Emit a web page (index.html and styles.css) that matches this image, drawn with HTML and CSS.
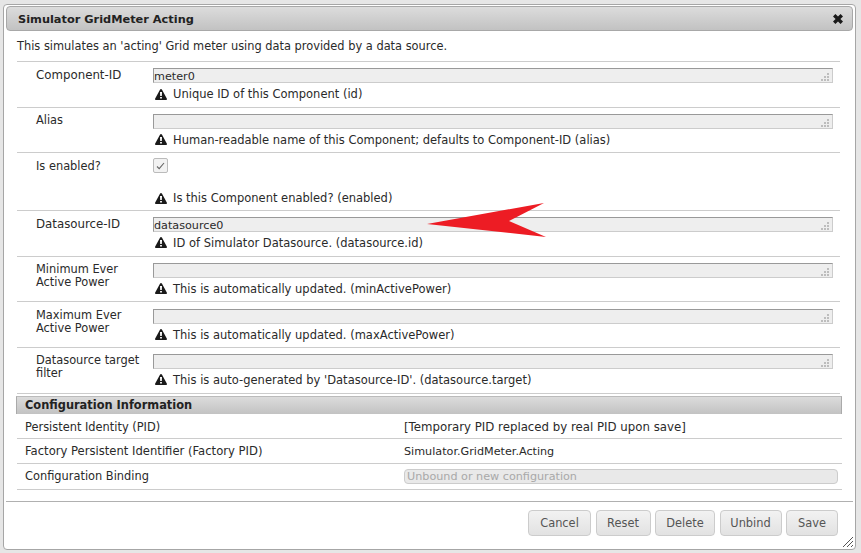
FILE: index.html
```html
<!DOCTYPE html>
<html lang="en">
<head>
  <meta charset="UTF-8" />
  <title>Simulator GridMeter Acting</title>
  <link rel="stylesheet" href="styles.css">
</head>
<body>
  <svg class="defs" width="0" height="0">
    <symbol id="warn" viewBox="0 0 12 11">
      <path d="M6 0 C6.4 0 6.7 .2 6.9 .6 L11.8 9.4 C12.2 10.1 11.8 11 11 11 H1 C.2 11 -.2 10.1 .2 9.4 L5.1 .6 C5.3 .2 5.6 0 6 0 Z M5 3 L5.2 7 H6.8 L7 3 Z M5.1 8 V9.6 H6.9 V8 Z" fill-rule="evenodd" fill="#1a1a1a"/>
    </symbol>
    <symbol id="grip" viewBox="0 0 8 8">
      <path d="M6 0h2v2H6zM3 3h2v2H3zM6 3h2v2H6zM0 6h2v2H0zM3 6h2v2H3zM6 6h2v2H6z" fill="#bdbdbd"/>
    </symbol>
  </svg>

  <div class="dialog">
    <div class="titlebar">
      <span class="title">Simulator GridMeter Acting</span>
      <svg class="close" viewBox="0 0 10 10" width="10" height="10">
        <path d="M0 2.4 L2.4 0 L5 2.6 L7.6 0 L10 2.4 L7.4 5 L10 7.6 L7.6 10 L5 7.4 L2.4 10 L0 7.6 L2.6 5 Z" fill="#1a1a1a"/>
      </svg>
    </div>

    <div class="content">
      <p class="desc">This simulates an 'acting' Grid meter using data provided by a data source.</p>

      <div class="rows">
        <div class="row">
          <div class="label label-id">Component-ID</div>
          <div class="control">
            <div class="field">meter0<svg class="grip"><use href="#grip"/></svg></div>
            <div class="help"><svg class="warn"><use href="#warn"/></svg>Unique ID of this Component (id)</div>
          </div>
        </div>
        <div class="row">
          <div class="label">Alias</div>
          <div class="control">
            <div class="field"><svg class="grip"><use href="#grip"/></svg></div>
            <div class="help"><svg class="warn"><use href="#warn"/></svg>Human-readable name of this Component; defaults to Component-ID (alias)</div>
          </div>
        </div>
        <div class="row row-check">
          <div class="label">Is enabled?</div>
          <div class="control">
            <div class="check">
              <svg viewBox="0 0 9 8" width="9" height="8"><path d="M1 4.5 L3.2 6.6 L8 1" fill="none" stroke="#666" stroke-width="1.1"/></svg>
            </div>
            <div class="help"><svg class="warn"><use href="#warn"/></svg>Is this Component enabled? (enabled)</div>
          </div>
        </div>
        <div class="row">
          <div class="label label-id">Datasource-ID</div>
          <div class="control">
            <div class="field">datasource0<svg class="grip"><use href="#grip"/></svg></div>
            <div class="help"><svg class="warn"><use href="#warn"/></svg>ID of Simulator Datasource. (datasource.id)</div>
          </div>
        </div>
        <div class="row">
          <div class="label">Minimum Ever Active Power</div>
          <div class="control">
            <div class="field"><svg class="grip"><use href="#grip"/></svg></div>
            <div class="help"><svg class="warn"><use href="#warn"/></svg>This is automatically updated. (minActivePower)</div>
          </div>
        </div>
        <div class="row row-max">
          <div class="label">Maximum Ever Active Power</div>
          <div class="control">
            <div class="field"><svg class="grip"><use href="#grip"/></svg></div>
            <div class="help"><svg class="warn"><use href="#warn"/></svg>This is automatically updated. (maxActivePower)</div>
          </div>
        </div>
        <div class="row">
          <div class="label">Datasource target filter</div>
          <div class="control">
            <div class="field"><svg class="grip"><use href="#grip"/></svg></div>
            <div class="help"><svg class="warn"><use href="#warn"/></svg>This is auto-generated by 'Datasource-ID'. (datasource.target)</div>
          </div>
        </div>
      </div>

      <div class="section">Configuration Information</div>
      <div class="info">
        <div class="info-row">
          <div class="info-label">Persistent Identity (PID)</div>
          <div class="pid-value">[Temporary PID replaced by real PID upon save]</div>
        </div>
        <div class="info-row">
          <div class="info-label factory-label">Factory Persistent Identifier (Factory PID)</div>
          <div class="factory-value">Simulator.GridMeter.Acting</div>
        </div>
        <div class="info-row">
          <div class="info-label">Configuration Binding</div>
          <div class="binding">Unbound or new configuration</div>
        </div>
      </div>
    </div>

    <div class="buttons">
      <button class="btn btn-cancel">Cancel</button>
      <button class="btn btn-reset">Reset</button>
      <button class="btn btn-delete">Delete</button>
      <button class="btn btn-unbind">Unbind</button>
      <button class="btn btn-save">Save</button>
    </div>

    <svg class="resizer" viewBox="0 0 12 12" width="12" height="12">
      <path d="M1 11 L11 1 M5 11 L11 5 M9 11 L11 9" stroke="#555" stroke-width="1" fill="none"/>
    </svg>
  </div>

  <svg class="arrow" viewBox="0 0 120 36" width="120" height="36">
    <path d="M0 21 L117 0 L82 18 L119 34 Z" fill="#ed1c24"/>
  </svg>
</body>
</html>
```

FILE: styles.css
```css
html, body { height: 100%; }
body {
  margin: 0;
  padding: 4px 5px 3px 3px;
  box-sizing: border-box;
  background: #e6e6e6;
  color: #2a2a2a;
  font-family: "DejaVu Sans", Verdana, sans-serif;
  font-size: 11.4px;
  overflow: hidden;
}
.defs { position: absolute; }

.dialog {
  position: relative;
  height: 100%;
  box-sizing: border-box;
  padding: 1px 2px;
  background: #fff;
  border: 1px solid #a6a6a6;
  border-radius: 4px;
  display: flex;
  flex-direction: column;
}

.titlebar {
  display: flex;
  align-items: center;
  justify-content: space-between;
  height: 25px;
  flex: none;
  box-sizing: border-box;
  padding: 0 9px 0 11px;
  background: linear-gradient(#dcdcdc, #c2c2c2);
  border: 1px solid #a8a8a8;
  border-radius: 4px;
}
.title { font-weight: bold; font-size: 11.35px; color: #222; }
.close { display: block; }

.content { flex: 1; padding: 0 13px 0 11px; }
.desc { margin: 8px 0 8px; line-height: 14px; color: #2a2a2a; }

.rows { border-top: 1px solid #ccc; }
.row {
  display: flex;
  border-bottom: 1px solid #ccc;
  padding: 6px 7px 5.67px 0;
  box-sizing: border-box;
}
.row-max { padding-top: 6.6px; padding-bottom: 5.07px; }
.label {
  width: 136px;
  flex: none;
  box-sizing: border-box;
  padding: 0.2px 8px 0 19px;
  line-height: 13px;
}
.label-id { font-size: 11.8px; padding-top: 1px; }
.control { flex: 1; }

.field {
  display: flex;
  height: 15px;
  box-sizing: border-box;
  padding: 0 3px 0 0;
  font-size: 11.2px;
  line-height: 15px;
  background: #eee;
  border: 1px solid #ccc;
  border-top-color: #999;
  border-left-color: #999;
}
.grip { width: 8px; height: 8px; flex: none; margin: auto 0 1px auto; }

.help {
  display: flex;
  align-items: center;
  margin-top: 4px;
  line-height: 14px;
  padding-left: 2px;
  font-size: 11.5px;
}
.warn { width: 12px; height: 11px; flex: none; margin-right: 6px; }

.row-check { padding-bottom: 4.67px; }
.row-check .help { margin-top: 18px; }
.check {
  display: flex;
  align-items: center;
  justify-content: center;
  width: 13px;
  height: 13px;
  background: #f2f2f2;
  border: 1px solid #bbb;
  border-radius: 2px;
  margin-top: -1px;
}

.section {
  margin: 2px -2px 0 -1px;
  height: 18px;
  box-sizing: border-box;
  padding-left: 8px;
  line-height: 17px;
  font-weight: bold;
  color: #222;
  background: linear-gradient(#dcdcdc, #c2c2c2);
  border-left: 1px solid #aaa;
  border-right: 1px solid #aaa;
  border-top: 1px solid #bbb;
}

.info { margin-right: -2px; }
.info-row {
  display: flex;
  align-items: center;
  height: 25.33px;
  box-sizing: border-box;
  border-bottom: 1px solid #ccc;
  padding-left: 8px;
}
.info-row:first-child { padding-top: 2px; }
.info-label { width: 379px; flex: none; }
.factory-label { font-size: 11.6px; }
.pid-value { font-size: 11.77px; }
.factory-value { font-size: 11.2px; }
.binding {
  flex: 1;
  height: 15px;
  box-sizing: border-box;
  margin-right: 4px;
  padding-left: 2px;
  line-height: 14px;
  font-size: 11.2px;
  color: #a8a8a8;
  background: #e9e9e9;
  border: 1px solid #ccc;
  border-radius: 4px;
}

.buttons {
  display: flex;
  justify-content: flex-end;
  gap: 4.5px;
  flex: none;
  height: 47px;
  box-sizing: border-box;
  padding: 8px 15px 0 0;
  border-top: 1px solid #b0b0b0;
}
.btn {
  height: 26px;
  padding: 0;
  font: inherit;
  color: #555;
  background: linear-gradient(#f2f2f2, #e2e2e2);
  border: 1px solid #ccc;
  border-radius: 4px;
}
.btn-cancel { width: 63px; }
.btn-reset { width: 55px; }
.btn-delete { width: 60px; }
.btn-unbind { width: 62px; }
.btn-save { width: 52px; }

.resizer { position: absolute; right: 1px; bottom: 1px; }
.arrow { position: absolute; left: 427px; top: 203px; }
```
